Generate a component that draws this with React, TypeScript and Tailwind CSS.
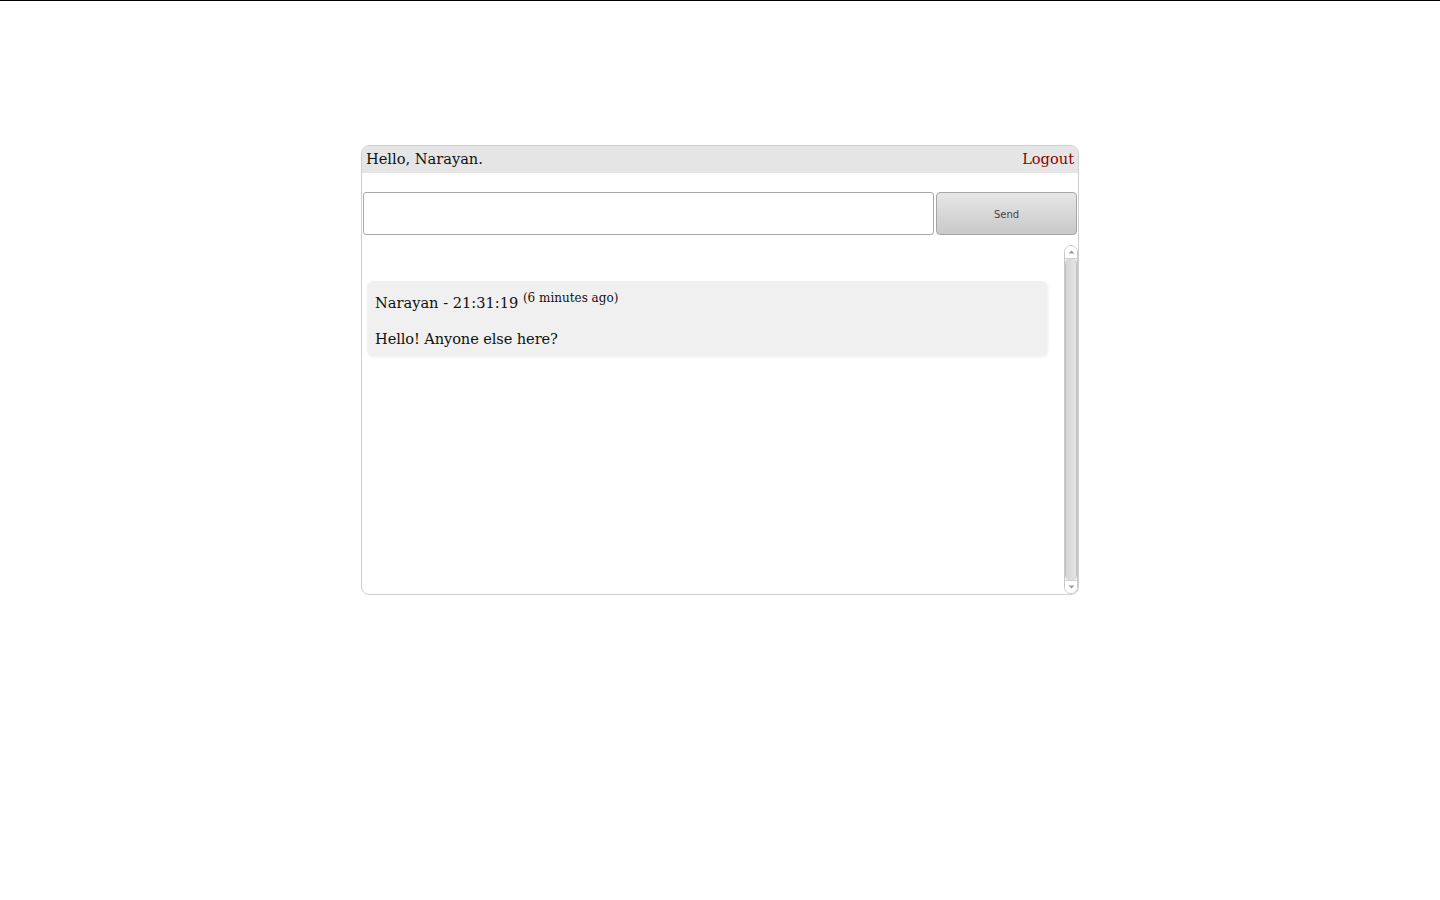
import React from "react";

const serif = { fontFamily: '"DejaVu Serif", "Liberation Serif", serif' };

const Scrollbar = () => (
  <div className="w-[14px] h-full flex flex-col border border-[#c8c8c8] rounded-[7px] bg-[#f4f4f4] overflow-hidden">
    <div className="h-[13px] flex items-center justify-center bg-white border-b border-[#d0d0d0]">
      <svg width="7" height="4" viewBox="0 0 7 4">
        <path d="M0.5 3.5 L3.5 0.5 L6.5 3.5 Z" fill="#9a9a9a" />
      </svg>
    </div>
    <div className="flex-1 bg-gradient-to-r from-[#d6d6d6] to-[#e4e4e4] border-x border-[#c4c4c4] rounded-[5px]" />
    <div className="h-[13px] flex items-center justify-center bg-white border-t border-[#d0d0d0]">
      <svg width="7" height="4" viewBox="0 0 7 4">
        <path d="M0.5 0.5 L3.5 3.5 L6.5 0.5 Z" fill="#9a9a9a" />
      </svg>
    </div>
  </div>
);

const messages = [
  {
    author: "Narayan",
    time: "21:31:19",
    ago: "6 minutes ago",
    text: "Hello! Anyone else here?",
  },
];

export default function App() {
  return (
    <div className="min-h-screen bg-white border-t border-black" style={serif}>
      <div className="w-[718px] mx-auto mt-[144px] border border-[#cfcfcf] rounded-[8px] overflow-hidden">
        <div className="h-[27px] bg-[#e5e5e5] flex items-center justify-between px-[4px] pb-[2px] text-[14.6px] text-[#111]">
          <span>Hello, Narayan.</span>
          <a href="#" className="text-[#8b0000]">
            Logout
          </a>
        </div>
        <div className="flex gap-[2px] pl-[1px] pr-[1px] mt-[19px]">
          <input
            type="text"
            className="w-[571px] h-[43px] border border-[#a9a9a9] rounded-[3px] outline-none px-2 bg-white"
          />
          <button
            className="flex-1 h-[43px] pt-[2px] rounded-[4px] border border-[#a6a6a6] bg-gradient-to-b from-[#e6e6e6] to-[#c9c9c9] text-[10px] text-[#444]"
            style={{ fontFamily: '"DejaVu Sans", "Liberation Sans", sans-serif' }}
          >
            Send
          </button>
        </div>
        <div className="flex h-[349px] mt-[10px]">
          <div className="flex-1 pt-[36px] pl-[5px] pr-[17px]">
            {messages.map((m, i) => (
              <div
                key={i}
                className="bg-[#f0f0f0] rounded-[6px] shadow-[1px_1px_3px_rgba(0,0,0,0.08)] px-[8px] pt-[12px] pb-[7px] text-[14.6px] text-[#111]"
              >
                <div className="leading-[20px]">
                  {m.author} - {m.time}{" "}
                  <sup className="text-[12px]">({m.ago})</sup>
                </div>
                <div className="mt-[16px] leading-[20px] tracking-[-0.1px]">{m.text}</div>
              </div>
            ))}
          </div>
          <Scrollbar />
        </div>
      </div>
    </div>
  );
}
